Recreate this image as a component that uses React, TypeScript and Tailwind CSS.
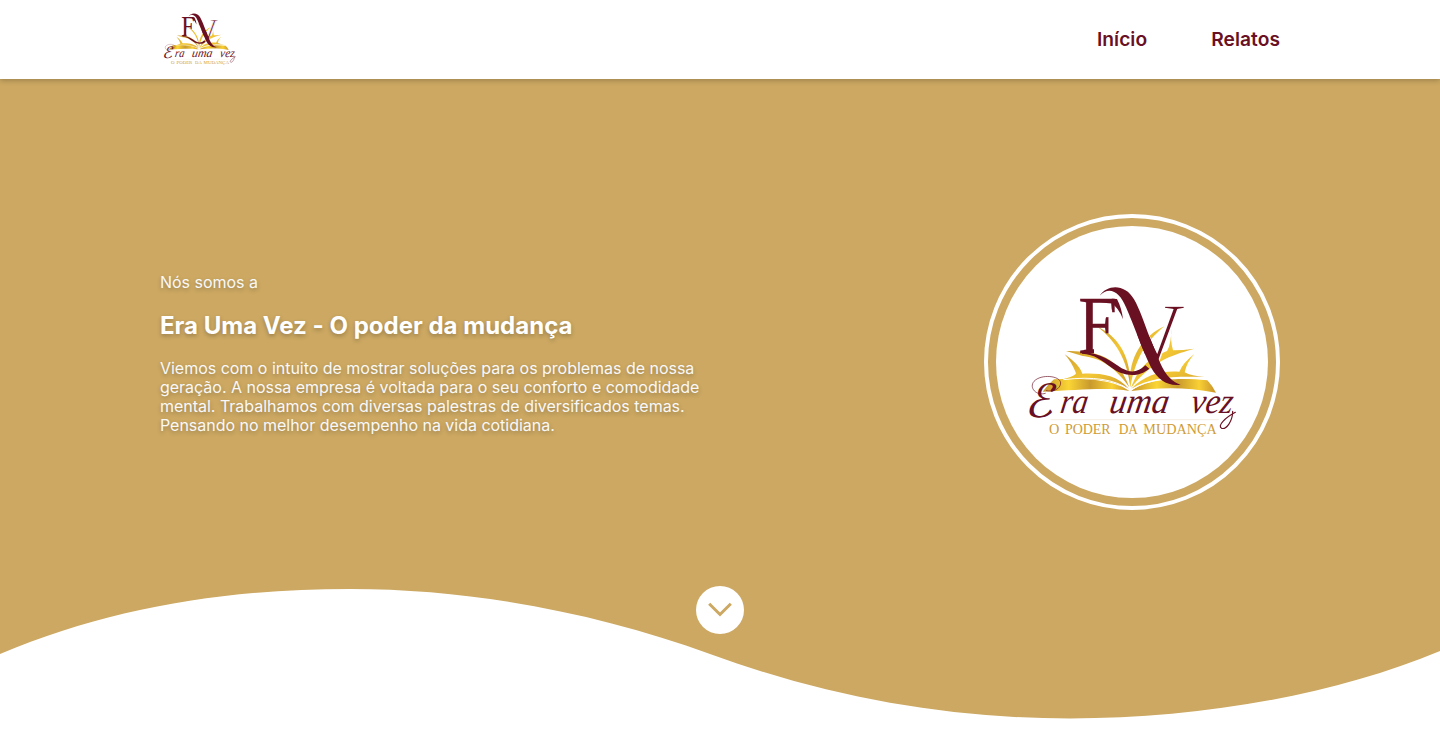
import React from "react";

function Logo({ id, className }: { id: string; className: string }) {
  const gold = `url(#${id}-gold)`;
  const page = `url(#${id}-page)`;
  const wine = "#6a1023";
  return (
    <svg viewBox="0 0 660 495" className={className} role="img" aria-label="Era uma vez">
      <defs>
        <linearGradient id={`${id}-gold`} x1="0" y1="0" x2="1" y2="1">
          <stop offset="0" stopColor="#cf9f2e" />
          <stop offset="0.5" stopColor="#f3c734" />
          <stop offset="1" stopColor="#cf9a2b" />
        </linearGradient>
        <linearGradient id={`${id}-page`} x1="0" y1="0" x2="1" y2="0">
          <stop offset="0" stopColor="#c8942b" />
          <stop offset="0.3" stopColor="#fad535" />
          <stop offset="0.55" stopColor="#c99a2d" />
          <stop offset="0.8" stopColor="#f9d034" />
          <stop offset="1" stopColor="#c8922b" />
        </linearGradient>
        <clipPath id={`${id}-stem`}>
          <path d="M170 40H320V160H222V230H170Z" />
        </clipPath>
        <clipPath id={`${id}-arm`}>
          <path d="M430 60H510V270H300V110H430Z" />
        </clipPath>
      </defs>
      <g fill={gold}>
        <path d="M232 140C282 162 334 215 331 322C323 240 284 178 232 140Z" />
        <path d="M433 139C376 165 322 226 331 322C346 238 375 188 433 139Z" />
        <path d="M138 213C205 215 290 212 328 322C276 246 223 232 188 228Z" />
        <path d="M134 223C163 243 181 262 187 281C236 279 291 283 326 326C276 299 224 295 128 298C152 292 166 286 168 280Q155 246 134 223Z" />
        <path d="M455 137Q450 183 459 211Q489 211 523 206C470 222 399 237 333 324C354 266 385 235 441 213Q454 193 455 137Z" />
        <path d="M523 222Q500 247 494 277Q514 288 553 291C474 288 393 289 334 326C375 282 430 271 478 275Q488 249 523 222Z" />
      </g>
      <path d="M102 298C190 292 286 300 328 333C270 321 178 329 68 335Q84 313 102 298Z" fill={page} />
      <path d="M334 333C374 297 474 292 562 301Q578 318 588 338C494 319 410 323 334 333Z" fill={page} />
      <path d="M130 299Q264 283 326 328M336 328Q410 283 552 297" fill="none" stroke="#fff" strokeWidth="3" />

      <g fontFamily="'Liberation Serif', serif" fill={wine}>
        <text
          x="175"
          y="220"
          fontSize="250"
          stroke={wine}
          strokeWidth="1"
          textLength="128"
          lengthAdjust="spacingAndGlyphs"
          clipPath={`url(#${id}-stem)`}
        >
          E
        </text>
        <g clipPath={`url(#${id}-arm)`}>
          <g transform="translate(305 252) skewX(4)">
            <text fontSize="265" textLength="203" lengthAdjust="spacingAndGlyphs" stroke="#fff" strokeWidth="4">
              V
            </text>
          </g>
        </g>
      </g>
      <g fill={wine}>
        <path d="M276 56L291 57Q305 84 309 118Q298 84 266 62Z" />
        <path d="M186 217C239 216 277 247 305 265Q345 287 376 256L388 266C351 297 304 285 275 263C247 243 224 222 186 221Z" />
        <path d="M239 47C263 12 316 12 342 58C358 85 372 127 389 172L402 205L375 222C358 185 342 136 318 82C300 36 268 16 239 47Z" />
        <path d="M351 161L389 172L421 250Q444 303 482 314C445 320 414 300 394 264Q372 220 351 161Z" />
      </g>

      <g fill="none" stroke={wine} strokeLinecap="round">
        <path d="M76 340C49 349 26 323 42 304C63 281 121 287 122 309C121 328 98 337 79 332" strokeWidth="2" />
        <path d="M638 394C638 424 619 449 605 445Q595 439 609 424Q622 410 646 397" strokeWidth="3.5" />
      </g>
      <g fontFamily="'Liberation Serif', serif" fontStyle="italic" fill={wine} fontSize="106">
        <g transform="translate(0 411) skewX(-14)">
          <text
            x="12"
            fontSize="138"
            fontStyle="normal"
            fontFamily="'DejaVu Sans', sans-serif"
            textLength="86"
            lengthAdjust="spacingAndGlyphs"
          >
            ℰ
          </text>
        </g>
        <g transform="translate(0 399) skewX(-9)">
          <text x="118" textLength="82" lengthAdjust="spacingAndGlyphs">ra</text>
          <text x="265" textLength="178" lengthAdjust="spacingAndGlyphs">uma</text>
          <text x="509" textLength="126" lengthAdjust="spacingAndGlyphs">vez</text>
        </g>
      </g>
      <path d="M92 419H596" stroke="#efe5d4" strokeWidth="2" />
      <g fontSize="43" fontFamily="'Liberation Serif', serif" fill="#cf9c37">
        <text x="87" y="462">O</text>
        <text x="135" y="462" textLength="137" lengthAdjust="spacingAndGlyphs">PODER</text>
        <text x="296" y="462" textLength="58" lengthAdjust="spacingAndGlyphs">DA</text>
        <text x="370" y="462" textLength="220" lengthAdjust="spacingAndGlyphs">MUDANÇA</text>
      </g>
    </svg>
  );
}

export default function App() {
  return (
    <div className="flex h-[745px] flex-col overflow-hidden bg-white font-['Inter',sans-serif]">
      <header className="z-10 flex h-[79px] shrink-0 items-center justify-between bg-white px-40 shadow-[0_2px_5px_rgba(0,0,0,0.2)]">
        <a href="#inicio" className="pl-px">
          <Logo id="nav" className="h-[57px] w-[76px]" />
        </a>
        <nav className="flex gap-16 text-[19.2px] font-semibold tracking-[0.05px] text-[#6a1023]">
          <a href="#inicio">Início</a>
          <a href="#relatos">Relatos</a>
        </nav>
      </header>
      <main className="relative flex-1 bg-[#cca862]">
        <svg
          viewBox="0 79 1440 666"
          preserveAspectRatio="none"
          className="absolute inset-0 h-full w-full"
          aria-hidden="true"
        >
          <path
            d="M0 654C110 608 225 589 350 589C475 589 600 614 710 654C830 698 950 718.5 1070 718.5C1200 718.5 1335 695 1440 651V745H0Z"
            fill="#fff"
          />
        </svg>
        <div className="relative flex h-full flex-col items-center">
          <section className="flex w-full items-start justify-between px-40 pt-[135px]">
            <div className="flex flex-col gap-[19px] pt-[59px] text-base leading-[19px] tracking-[-0.02px] text-[#f8f8f8] [text-shadow:0_2px_4px_rgba(0,0,0,0.25)]">
              <p>Nós somos a</p>
              <h1 className="text-2xl leading-[29px] font-bold tracking-[0.01px] text-white">Era Uma Vez - O poder da mudança</h1>
              <p>
                Viemos com o intuito de mostrar soluções para os problemas de nossa
                <br />
                geração. A nossa empresa é voltada para o seu conforto e comodidade
                <br />
                mental. Trabalhamos com diversas palestras de diversificados temas.
                <br />
                Pensando no melhor desempenho na vida cotidiana.
              </p>
            </div>
            <div className="size-[296px] rounded-full border-4 border-white p-2">
              <div className="flex size-full justify-center rounded-full bg-white pt-[54px] pr-1">
                <Logo id="hero" className="h-[165px] w-[220px]" />
              </div>
            </div>
          </section>
          <button
            type="button"
            aria-label="Descer"
            className="mt-[76px] flex size-12 items-center justify-center rounded-full bg-white"
          >
            <svg viewBox="0 0 24 24" className="size-6" fill="none" stroke="#cca862" strokeWidth="3">
              <path d="M1.2 5.7L12 16.5L22.8 5.7" />
            </svg>
          </button>
        </div>
      </main>
    </div>
  );
}
